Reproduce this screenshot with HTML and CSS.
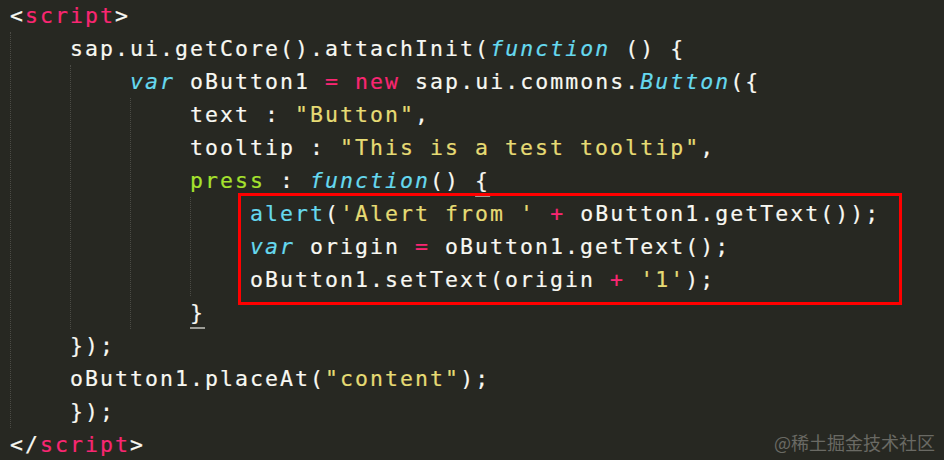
FILE: index.html
```html
<!DOCTYPE html>
<html lang="en">
<head>
<meta charset="utf-8">
<title>Code</title>
<link rel="stylesheet" href="styles.css">
</head>
<body>
<div class="editor">
  <div class="code">
    <div class="ln"><span class="p">&lt;</span><span class="k">script</span><span class="p">&gt;</span></div>
    <div class="blk">
      <div class="ln">sap.ui.getCore().attachInit(<span class="t">function</span> () {</div>
      <div class="blk">
        <div class="ln"><span class="t">var</span> oButton1 <span class="k">=</span> <span class="k">new</span> sap.ui.commons.<span class="t">Button</span>({</div>
        <div class="blk">
          <div class="ln">text : <span class="s">"Button"</span>,</div>
          <div class="ln">tooltip : <span class="s">"This is a test tooltip"</span>,</div>
          <div class="ln"><span class="g">press</span> : <span class="t">function</span>() <span class="match">{</span></div>
          <div class="blk">
            <div class="hl">
              <div class="ln"><span class="f">alert</span>(<span class="s">'Alert from '</span> <span class="k">+</span> oButton1.getText());</div>
              <div class="ln"><span class="t">var</span> origin <span class="k">=</span> oButton1.getText();</div>
              <div class="ln">oButton1.setText(origin <span class="k">+</span> <span class="s">'1'</span>);</div>
            </div>
          </div>
          <div class="ln"><span class="match">}</span></div>
        </div>
      </div>
      <div class="ln">});</div>
      <div class="ln">oButton1.placeAt(<span class="s">"content"</span>);</div>
      <div class="ln">});</div>
    </div>
    <div class="ln"><span class="p">&lt;/</span><span class="k">script</span><span class="p">&gt;</span></div>
  </div>
  <div class="mark">@稀土掘金技术社区</div>
</div>
</body>
</html>
```
FILE: styles.css
```css
html, body {
  margin: 0;
  padding: 0;
  background: #272822;
}

.editor {
  position: relative;
  width: 944px;
  height: 460px;
  overflow: hidden;
  background: #272822;
}

.code {
  margin-top: -1px;
  padding-left: 10px;
  font-family: "DejaVu Sans Mono", "Liberation Mono", monospace;
  font-size: 21.5px;
  letter-spacing: 2.06px;
  line-height: 33px;
  color: #f8f8f2;
  -webkit-text-stroke: 0.2px currentColor;
}

.ln {
  height: 33px;
  white-space: pre;
}

.blk {
  border-left: 1px dotted #4b4b45;
  padding-left: 59px;
}

.hl {
  position: relative;
}

.hl::after {
  content: "";
  position: absolute;
  left: -12px;
  top: -4px;
  width: 664px;
  height: 112px;
  border: 3px solid #ff0000;
  box-sizing: border-box;
}

.k { color: #f92672; }
.p { color: #f8f8f2; }
.t { color: #66d9ef; font-style: italic; }
.f { color: #66d9ef; }
.s { color: #e6db74; }
.g { color: #a6e22e; }

.match {
  text-decoration: underline;
  text-decoration-color: #9c9c96;
  text-decoration-thickness: 2px;
  text-underline-offset: 7px;
}

.mark {
  position: absolute;
  right: 9px;
  bottom: 8px;
  font-family: "Noto Sans CJK SC", "Noto Sans", sans-serif;
  font-size: 18px;
  line-height: 20px;
  color: #6a6a64;
  -webkit-text-stroke: 0;
}
```
